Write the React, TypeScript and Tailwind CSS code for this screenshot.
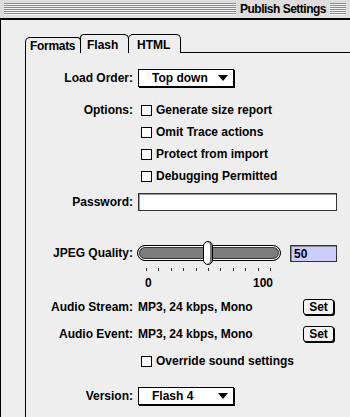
import React from "react";

type RowProps = {
  label?: string;
  className?: string;
  children?: React.ReactNode;
};

// label column ends at x=133, controls start at x=138
const Row: React.FC<RowProps> = ({ label, className, children }) => (
  <div className={"flex items-center " + (className ?? "")}>
    <div className="w-[107px] shrink-0 text-right">{label}</div>
    <div className="ml-[5px] flex flex-1 items-center">{children}</div>
  </div>
);

const Checkbox: React.FC<{ label: string }> = ({ label }) => (
  <div className="flex items-center pl-[3px]">
    <div className="w-[11px] h-[11px] border border-black bg-white" />
    <span className="ml-[4px]">{label}</span>
  </div>
);

const Popup: React.FC<{ value: string }> = ({ value }) => (
  <div className="flex w-[96px] h-[18px] items-center justify-between bg-white border border-black shadow-[1px_1px_0_#000] pl-[13px] pr-[5px]">
    <span>{value}</span>
    <svg width="10" height="6" viewBox="0 0 10 6">
      <path d="M0 0H10L5 6Z" fill="#000" />
    </svg>
  </div>
);

const SetButton: React.FC = () => (
  <div className="flex w-[31px] h-[16px] items-center justify-center rounded-[3px] border border-black bg-[#f2f2f2] shadow-[1px_1px_0_#000]">
    Set
  </div>
);

const ticks = [0, 1, 2, 3, 4, 5, 6, 7, 8, 9, 10];

const App: React.FC = () => {
  return (
    <div className="w-[350px] h-[417px] overflow-hidden bg-[#eeeeee] font-['Liberation_Sans',sans-serif] font-bold text-[12px] leading-[14px] text-black">
      {/* title bar */}
      <div className="flex h-[20px] items-center bg-[#dddddd] border-b-2 border-black">
        <div className="ml-[4px] h-[12px] flex-1 bg-[repeating-linear-gradient(to_bottom,#8a8a8a_0px,#8a8a8a_1px,#f4f4f4_1px,#f4f4f4_2px)]" />
        <div className="px-[4px] text-[12px] tracking-[-0.5px]">Publish Settings</div>
        <div className="mr-[4px] h-[12px] w-[16px] bg-[repeating-linear-gradient(to_bottom,#8a8a8a_0px,#8a8a8a_1px,#f4f4f4_1px,#f4f4f4_2px)]" />
      </div>

      <div className="flex h-[397px] flex-col border-l border-black pl-[24px]">
        {/* tabs */}
        <div className="mt-[14px] flex h-[19px] items-end">
          <div className="h-[16px] w-[56px] rounded-tl-[5px] rounded-tr-[4px] border-l border-t border-r border-black pl-[4px] pt-px tracking-[-0.3px] whitespace-nowrap">
            Formats
          </div>
          <div className="-ml-px h-[19px] w-[49px] rounded-tl-[4px] rounded-tr-[5px] border-l border-t border-r border-black pl-[6px] pt-[3px]">
            Flash
          </div>
          <div className="-ml-px h-[19px] w-[53px] rounded-tl-[5px] rounded-tr-[5px] border-l border-t border-r border-black pl-[8px] pt-[3px]">
            HTML
          </div>
          <div className="h-[19px] flex-1 border-b border-black" />
        </div>

        {/* panel */}
        <div className="flex flex-1 flex-col border-l border-black">
          <Row label="Load Order:" className="mt-[16px] h-[18px]">
            <Popup value="Top down" />
          </Row>

          <div className="mt-[12px] flex flex-col">
            <Row label="Options:" className="h-[22px]">
              <Checkbox label="Generate size report" />
            </Row>
            <Row className="h-[22px]">
              <Checkbox label="Omit Trace actions" />
            </Row>
            <Row className="h-[22px]">
              <Checkbox label="Protect from import" />
            </Row>
            <Row className="h-[22px]">
              <Checkbox label="Debugging Permitted" />
            </Row>
          </div>

          <Row label="Password:" className="mt-[6px] h-[18px]">
            <div className="h-[18px] w-[199px] bg-white border border-[#333] shadow-[inset_1px_1px_0_#999]" />
          </Row>

          <Row label="JPEG Quality:" className="mt-[29px] h-[26px]">
            <div className="relative -ml-px flex h-[26px] w-[144px] items-center">
              <div className="h-[16px] w-full rounded-full border border-black bg-[#7c7c7c] shadow-[inset_0_0_0_1px_#fff,inset_0_0_0_2px_#333]" />
              <div className="absolute left-[66px] top-[1px] h-[24px] w-[10px] rounded-[5px] border border-black bg-white shadow-[inset_-2px_0_0_#777]" />
            </div>
            <div className="ml-[9px] mt-[1px] flex h-[17px] w-[47px] items-center bg-[#ccccff] border border-[#333] shadow-[inset_1px_1px_0_#888] pl-[3px]">
              50
            </div>
          </Row>

          <Row className="mt-px h-[4px]">
            <div className="ml-[8px] flex w-[125px] justify-between">
              {ticks.map((t) => (
                <div key={t} className="h-[3px] w-px bg-[#333]" />
              ))}
            </div>
          </Row>

          <Row className="mt-[5px] h-[14px]">
            <div className="ml-[7px] flex w-[128px] justify-between">
              <span>0</span>
              <span>100</span>
            </div>
          </Row>

          <Row label="Audio Stream:" className="mt-[8px] h-[18px]">
            <div className="flex w-[196px] items-center justify-between">
              <span>MP3, 24 kbps, Mono</span>
              <SetButton />
            </div>
          </Row>

          <Row label="Audio Event:" className="mt-[9px] h-[18px]">
            <div className="flex w-[196px] items-center justify-between">
              <span>MP3, 24 kbps, Mono</span>
              <SetButton />
            </div>
          </Row>

          <Row className="mt-[9px] h-[18px]">
            <Checkbox label="Override sound settings" />
          </Row>

          <Row label="Version:" className="mt-[17px] h-[18px]">
            <Popup value="Flash 4" />
          </Row>
        </div>
      </div>
    </div>
  );
};

export default App;
